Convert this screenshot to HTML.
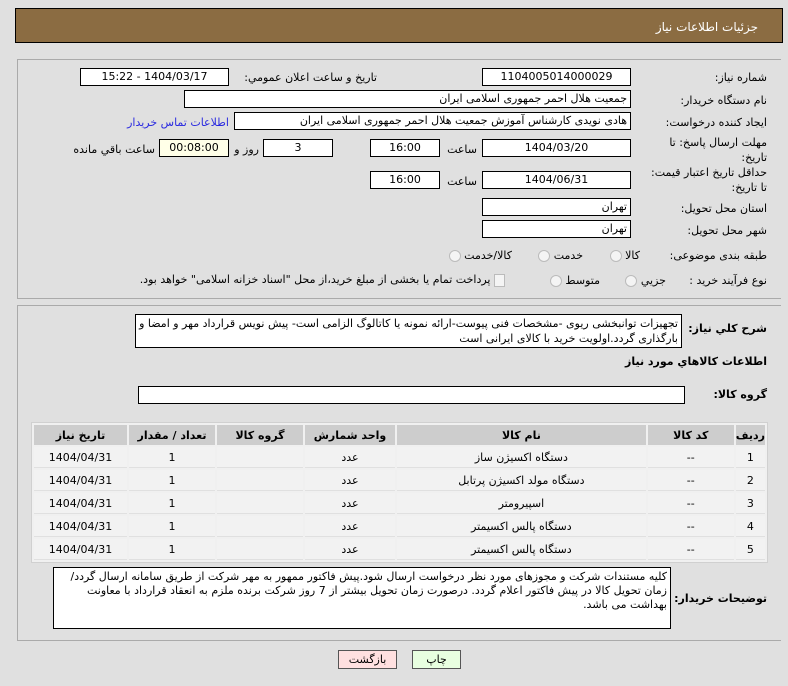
<!DOCTYPE html>
<html><head><meta charset="utf-8"><style>
body{margin:0;width:788px;height:686px;background:#e0e0e0;font-family:"DejaVu Sans",sans-serif;font-size:11px;color:#000;position:relative;overflow:hidden}
.a{position:absolute;white-space:nowrap}
.box{position:absolute;background:#fff;border:1px solid #000;box-sizing:border-box;direction:rtl;padding:0 3px;line-height:16px;font-size:11px;overflow:hidden}
.c{text-align:center}
.l{position:absolute;direction:rtl;text-align:right;white-space:nowrap}
.rad{display:inline-block;width:10px;height:10px;border:1px solid #bbb;border-radius:50%;background:#f4f4f4;vertical-align:middle}
table{border-collapse:separate;border-spacing:2px;background:#f0f0f0}
td,th{text-align:center;font-size:11px;height:20px;padding:0}
th{background:#cdcdcd;font-weight:bold}
td{background:#f2f2f2;border-bottom:1px solid #e0e0e0}
.b{font-weight:bold;font-size:11px;letter-spacing:-0.4px}
</style></head><body>
<div class="a" style="left:15px;top:8px;width:768px;height:35px;background:#8b6c42;border:1px solid #000;box-sizing:border-box"></div>
<div class="l" style="right:30px;top:20px;color:#fff;font-size:12px">جزئیات اطلاعات نیاز</div>

<div class="a" style="left:17px;top:59px;width:764px;height:240px;border:1px solid #aaa;border-right:none;box-sizing:border-box"></div>
<div class="a" style="left:17px;top:305px;width:764px;height:336px;border:1px solid #aaa;border-right:none;box-sizing:border-box"></div>

<div class="l" style="right:21px;top:71px">شماره نیاز:</div>
<div class="box c" style="left:482px;top:68px;width:149px;height:18px">1104005014000029</div>
<div class="l" style="right:411px;top:71px">تاریخ و ساعت اعلان عمومي:</div>
<div class="box c" style="left:80px;top:68px;width:149px;height:18px">1404/03/17 - 15:22</div>

<div class="l" style="right:21px;top:94px">نام دستگاه خریدار:</div>
<div class="box" style="left:184px;top:90px;width:447px;height:18px">جمعیت هلال احمر جمهوری اسلامی ایران</div>

<div class="l" style="right:21px;top:116px">ایجاد کننده درخواست:</div>
<div class="box" style="left:234px;top:112px;width:397px;height:18px">هادی نویدی کارشناس آموزش جمعیت هلال احمر جمهوری اسلامی ایران</div>
<div class="l" style="right:559px;top:116px;color:#2a2ae0">اطلاعات تماس خریدار</div>

<div class="l" style="right:21px;top:136px">مهلت ارسال پاسخ: تا</div>
<div class="l" style="right:21px;top:151px">تاریخ:</div>
<div class="box c" style="left:482px;top:139px;width:149px;height:18px">1404/03/20</div>
<div class="l" style="right:311px;top:143px">ساعت</div>
<div class="box c" style="left:370px;top:139px;width:70px;height:18px">16:00</div>
<div class="box c" style="left:263px;top:139px;width:70px;height:18px">3</div>
<div class="l" style="right:529px;top:143px">روز و</div>
<div class="box c" style="left:159px;top:139px;width:70px;height:18px;background:#ffffe8">00:08:00</div>
<div class="l" style="right:633px;top:143px">ساعت باقي مانده</div>

<div class="l" style="right:21px;top:166px">حداقل تاریخ اعتبار قیمت:</div>
<div class="l" style="right:21px;top:181px">تا تاریخ:</div>
<div class="box c" style="left:482px;top:171px;width:149px;height:18px">1404/06/31</div>
<div class="l" style="right:311px;top:175px">ساعت</div>
<div class="box c" style="left:370px;top:171px;width:70px;height:18px">16:00</div>

<div class="l" style="right:21px;top:202px">استان محل تحویل:</div>
<div class="box" style="left:482px;top:198px;width:149px;height:18px">تهران</div>
<div class="l" style="right:21px;top:224px">شهر محل تحویل:</div>
<div class="box" style="left:482px;top:220px;width:149px;height:18px">تهران</div>

<div class="l" style="right:21px;top:249px">طبقه بندی موضوعی:</div>
<div class="l" style="right:148px;top:249px">کالا <span class="rad"></span></div>
<div class="l" style="right:205px;top:249px">خدمت <span class="rad"></span></div>
<div class="l" style="right:276px;top:249px">کالا/خدمت <span class="rad"></span></div>

<div class="l" style="right:21px;top:274px">نوع فرآیند خرید :</div>
<div class="l" style="right:122px;top:274px">جزيي <span class="rad"></span></div>
<div class="l" style="right:188px;top:274px">متوسط <span class="rad"></span></div>
<div class="l" style="right:283px;top:273px"><span style="display:inline-block;width:9px;height:11px;border:1px solid #bbb;background:#f4f4f4;vertical-align:middle"></span> پرداخت تمام یا بخشی از مبلغ خرید،از محل "اسناد خزانه اسلامی" خواهد بود.</div>

<div class="l b" style="right:21px;top:322px">شرح کلي نیاز:</div>
<div class="box" style="left:135px;top:314px;width:547px;height:34px;line-height:15px;white-space:normal;padding-top:1px">تجهیزات توانبخشی ریوی -مشخصات فنی پیوست-ارائه نمونه یا کاتالوگ الزامی است- پیش نویس قرارداد مهر و امضا و بارگذاری گردد.اولویت خرید با کالای ایرانی است</div>
<div class="l b" style="right:21px;top:355px">اطلاعات كالاهاي مورد نیاز</div>
<div class="l b" style="right:21px;top:388px">گروه کالا:</div>
<div class="box" style="left:138px;top:386px;width:547px;height:18px"></div>

<table class="a" style="left:31px;top:422px;width:737px;border:1px solid #d0d0d0;direction:rtl">
<tr><th style="width:27px">ردیف</th><th style="width:86px">کد کالا</th><th>نام کالا</th><th style="width:90px">واحد شمارش</th><th style="width:86px">گروه کالا</th><th style="width:86px">تعداد / مقدار</th><th style="width:93px">تاریخ نیاز</th></tr>
<tr><td>1</td><td>--</td><td>دستگاه اکسیژن ساز</td><td>عدد</td><td></td><td>1</td><td>1404/04/31</td></tr>
<tr><td>2</td><td>--</td><td>دستگاه مولد اکسیژن پرتابل</td><td>عدد</td><td></td><td>1</td><td>1404/04/31</td></tr>
<tr><td>3</td><td>--</td><td>اسپیرومتر</td><td>عدد</td><td></td><td>1</td><td>1404/04/31</td></tr>
<tr><td>4</td><td>--</td><td>دستگاه پالس اکسیمتر</td><td>عدد</td><td></td><td>1</td><td>1404/04/31</td></tr>
<tr><td>5</td><td>--</td><td>دستگاه پالس اکسیمتر</td><td>عدد</td><td></td><td>1</td><td>1404/04/31</td></tr>
</table>

<div class="l b" style="right:21px;top:592px">توضیحات خریدار:</div>
<div class="box" style="left:53px;top:567px;width:618px;height:62px;line-height:14px;white-space:normal;padding-top:2px">کلیه مستندات شرکت و مجوزهای مورد نظر درخواست ارسال شود.پیش فاکتور ممهور به مهر شرکت از طریق سامانه ارسال گردد/زمان تحویل کالا در پیش فاکتور اعلام گردد. درصورت زمان تحویل بیشتر از 7 روز شرکت برنده ملزم به انعقاد قرارداد با معاونت بهداشت می باشد.</div>

<div class="a c" style="left:338px;top:650px;width:59px;height:19px;background:#ffe0e0;border:1px solid #555;box-sizing:border-box;line-height:17px">بازگشت</div>
<div class="a c" style="left:412px;top:650px;width:49px;height:19px;background:#e8ffe0;border:1px solid #555;box-sizing:border-box;line-height:17px">چاپ</div>
</body></html>
